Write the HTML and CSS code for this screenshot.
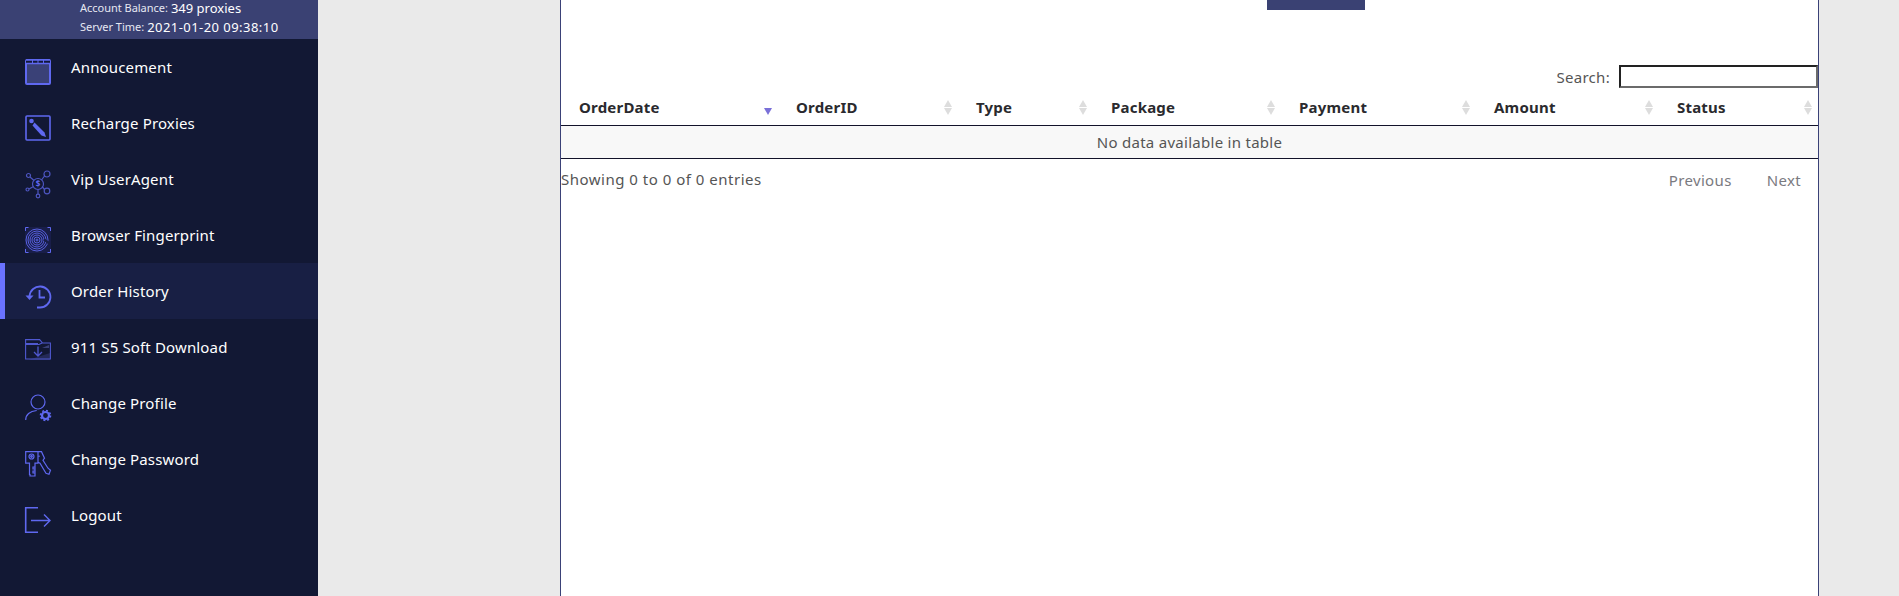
FILE: index.html
```html
<!DOCTYPE html>
<html lang="en">
<head>
<meta charset="utf-8">
<title>Order History</title>
<link rel="stylesheet" href="styles.css">
</head>
<body>
<div class="page">
  <aside class="sidebar">
    <div class="account">
      <div class="account-row"><span class="account-label">Account Balance:</span><span class="account-value">349 proxies</span></div>
      <div class="account-row"><span class="account-label">Server Time:</span><span class="account-value account-time">2021-01-20 09:38:10</span></div>
    </div>
    <nav class="menu">
      <a class="menu-item">
        <svg class="icon" viewBox="0 0 26 26"><rect x="1" y="1" width="24" height="24" rx="1" fill="#3a4177" stroke="#5f68f0" stroke-width="2"/><path d="M1 1h24v3H1z" fill="#12183a"/><path d="M1 1h24M1 4.500h24" stroke="#5f68f0" stroke-width="1.600"/><path d="M7.500 1v3M13 1v3M18.500 1v3" stroke="#5f68f0" stroke-width="1"/></svg>
        <span>Annoucement</span>
      </a>
      <a class="menu-item">
        <svg class="icon" viewBox="0 0 26 26"><rect x="1" y="1" width="24" height="24" rx="1" fill="none" stroke="#5f68f0" stroke-width="1.600"/><circle cx="6.500" cy="6" r="2.300" fill="#5f68f0"/><path d="M9.500 7.500l10 10 1.500 4.500-4.500-1.500-9-10z" fill="#5f68f0"/></svg>
        <span>Recharge Proxies</span>
      </a>
      <a class="menu-item">
        <svg class="icon" viewBox="0 0 26 26" fill="none" stroke="#4d55c0" stroke-width="1.200"><circle cx="13" cy="13" r="5.500"/><circle cx="3.500" cy="4.500" r="2"/><circle cx="22" cy="3" r="3"/><circle cx="22" cy="20" r="2.800"/><circle cx="13" cy="25" r="1.800"/><circle cx="2.500" cy="18.500" r="1.500"/><path d="M5 6l4 3.500M19.500 5l-3 4M19.500 18.500l-2.500-3M13 18.500v4.500M4 18l4.500-2.500"/><text class="dollar" x="13" y="16.300" text-anchor="middle">$</text></svg>
        <span>Vip UserAgent</span>
      </a>
      <a class="menu-item">
        <svg class="icon" viewBox="0 0 26 26" fill="none"><rect width="26" height="26" fill="#191e49"/><path d="M.5 4V.5h3M22.500.500h3V4M.5 22v3.500h3M22.500 25.500h3V22" stroke="#5f68f0" stroke-width="1"/><g stroke="#5f68f0" stroke-width=".9"><circle cx="12" cy="13" r="11"/><circle cx="12" cy="13" r="9"/><circle cx="12" cy="13" r="7"/><circle cx="12" cy="13" r="5"/><circle cx="12" cy="13" r="3"/><circle cx="12" cy="13" r="1"/></g><path d="M19 12.500l6 4.500" stroke="#191e49" stroke-width="2.500"/></svg>
        <span>Browser Fingerprint</span>
      </a>
      <a class="menu-item active">
        <svg class="icon" viewBox="0 0 26 26" fill="none" stroke="#5f68f0" stroke-width="1.800"><path d="M4.500 13a10.500 10.500 0 1 1 10.500 11.500h-3"/><path d="M14.500 7v7.500h5.500"/><path d="M0.500 12.500h8L4.500 17z" fill="#5f68f0" stroke="none"/></svg>
        <span>Order History</span>
      </a>
      <a class="menu-item">
        <svg class="icon" viewBox="0 0 26 26" fill="none" stroke="#4f58d0" stroke-width="1.100"><path d="M17 9l7-3v3z" fill="#3a4177" stroke="none"/><path d="M3 21l22-7v7z" fill="#242a58" stroke="none"/><path d="M.6 20V.6h14l3 3.400H25.400V20zM.6 4.500H13M.6 5.500H14l3-1.500"/><path d="M13 7.500v9M9 13l4 4 4-4" stroke-width="1.300"/></svg>
        <span>911 S5 Soft Download</span>
      </a>
      <a class="menu-item">
        <svg class="icon" viewBox="0 0 26 26" fill="none" stroke="#5f68f0" stroke-width="1.200"><circle cx="13" cy="7" r="7"/><path d="M.7 25c0-5 4-9 11-9.500"/><circle cx="20.500" cy="20.500" r="3.500" stroke-width="2.200"/><circle cx="20.500" cy="20.500" r="5" stroke-width="1.600" stroke-dasharray="2 1.900"/></svg>
        <span>Change Profile</span>
      </a>
      <a class="menu-item">
        <svg class="icon" viewBox="0 0 26 26" fill="none" stroke="#5f68f0" stroke-width="1.200"><path d="M.7.700H13v11.500H10v12.800H5v-1.500H4.500V12.200H.7z"/><circle cx="6.500" cy="5.500" r="2.500"/><circle cx="6.500" cy="5.500" r=".8"/><path d="M10 16h-2v2h2M10 20H8v2h2"/><path d="M13 .7h3.500l3 6.500-1.500 2 5 8 2.500 2-1.500 4-3-1-6-10-2-1"/><path d="M14 4.500v1.500"/></svg>
        <span>Change Password</span>
      </a>
      <a class="menu-item">
        <svg class="icon" viewBox="0 0 26 26" fill="none" stroke="#5f68f0" stroke-width="1.400"><path d="M13 .7H.7v24.600H13" stroke-width="1.600"/><path d="M6 13.500h19M19 7.500l6 6-6 6"/></svg>
        <span>Logout</span>
      </a>
    </nav>
  </aside>
  <main class="main">
    <section class="panel">
      <div class="button-row"><div class="top-button"></div></div>
      <div class="search-row">
        <label class="search-label" for="search">Search:</label>
        <input class="search-input" id="search" type="text">
      </div>
      <table class="orders">
        <colgroup>
          <col class="c-date"><col class="c-id"><col class="c-type"><col class="c-package"><col class="c-payment"><col class="c-amount"><col class="c-status">
        </colgroup>
        <thead>
          <tr>
            <th class="sort-desc">OrderDate</th>
            <th>OrderID</th>
            <th>Type</th>
            <th>Package</th>
            <th>Payment</th>
            <th>Amount</th>
            <th>Status</th>
          </tr>
        </thead>
        <tbody>
          <tr><td class="empty" colspan="7">No data available in table</td></tr>
        </tbody>
      </table>
      <div class="table-footer">
        <div class="info">Showing 0 to 0 of 0 entries</div>
        <div class="pager"><a class="page-link">Previous</a><a class="page-link">Next</a></div>
      </div>
    </section>
  </main>
</div>
</body>
</html>
```
FILE: styles.css
```css
* { box-sizing: border-box; }
html, body { margin: 0; height: 100%; overflow: hidden; }
body { font-family: "Noto Sans", "Open Sans", sans-serif; background: #eaeaea; color: #444; }
.page { display: flex; height: 596px; }

.sidebar { width: 318px; flex: none; background: #121834; color: #fff; }
.account { height: 39px; background: #3a4173; padding: 0 0 0 80px; display: flex; flex-direction: column; gap: 5px; }
.account-row { height: 14px; display: flex; align-items: center; gap: 3px; }
.account-label { font-size: 11px; color: #e6e8f2; letter-spacing: -.02px; }
.account-value { font-size: 13px; color: #fff; margin-top: 2px; }
.account-time { letter-spacing: .45px; }

.menu { display: flex; flex-direction: column; }
.menu-item { height: 56px; display: flex; align-items: flex-start; padding: 20px 0 0 25px; gap: 20px; font-size: 15px; color: #fff; line-height: 17px; letter-spacing: .15px; }
.menu-item.active { background: #181f44; border-left: 5px solid #6a72ff; padding-left: 20px; }
.icon { width: 26px; height: 26px; flex: none; overflow: visible; }
.dollar { font-size: 8px; fill: #5f68f0; stroke: none; font-weight: 700; letter-spacing: 0; }

.main { flex: 1; padding-left: 242px; padding-right: 80px; }
.panel { height: 596px; background: #fff; border: solid #3a4177; border-width: 0 1px; }
.button-row { display: flex; padding-left: 706px; height: 65px; }
.top-button { width: 98px; height: 10px; background: #3a4173; }
.search-row { display: flex; justify-content: flex-end; align-items: center; gap: 9px; height: 23px; }
.search-label { font-size: 15px; color: #555; letter-spacing: .3px; }
.search-input { width: 199px; height: 23px; border: 2px solid; border-color: #222 #6b6b6b #6b6b6b #222; background: #fff; padding: 0; margin: 0; }

.orders { width: 100%; table-layout: fixed; border-collapse: collapse; }
.c-date { width: 217px; } .c-id { width: 180px; } .c-type { width: 135px; } .c-package { width: 188px; }
.c-payment { width: 195px; } .c-amount { width: 183px; } .c-status { width: 159px; }
.orders th { height: 37px; padding: 2px 0 0 18px; text-align: left; font-weight: 700; font-size: 15px; letter-spacing: .2px; color: #2a2a2e; border-bottom: 1px solid #12122a; position: relative; }
.orders th::before, .orders th::after { content: ""; position: absolute; right: 6px; width: 0; height: 0; border-left: 4px solid transparent; border-right: 4px solid transparent; }
.orders th::before { top: 12px; border-bottom: 7px solid #ddd; }
.orders th::after { top: 20px; border-top: 7px solid #ddd; }
.orders th.sort-desc::before { display: none; }
.orders th.sort-desc::after { top: 20px; right: 6px; border-top-color: #7a70d8; }
.empty { height: 33px; padding: 0; text-align: center; background: #f8f8f8; border-bottom: 1px solid #12122a; color: #555; font-size: 15px; letter-spacing: .28px; }

.table-footer { display: flex; justify-content: space-between; align-items: flex-start; padding-top: 10px; font-size: 15px; color: #555; }
.info { letter-spacing: .5px; }
.pager { display: flex; gap: 35px; padding: 1px 17px 0 0; color: #7a7a80; letter-spacing: .35px; }
```
